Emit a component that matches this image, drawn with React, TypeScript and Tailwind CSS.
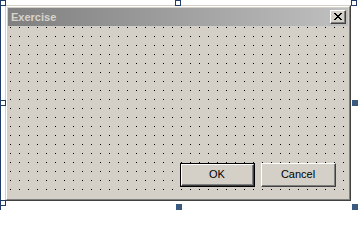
import React from 'react';

function Handle({ filled, className }: { filled?: boolean; className: string }) {
    return (
        <div
            className={`absolute w-[6px] h-[6px] ${filled ? 'bg-[#3a5a80]' : 'bg-white border border-[#1f3b66]'} ${className}`}
        />
    );
}

function CloseGlyph() {
    // classic 8x7 caption "X"
    const rows = ['11000011', '01100110', '00111100', '00011000', '00111100', '01100110', '11000011'];
    return (
        <svg width="8" height="7" viewBox="0 0 8 7" shapeRendering="crispEdges">
            {rows.map((row, y) =>
                row.split('').map((c, x) => (c === '1' ? <rect key={`${x}-${y}`} x={x} y={y} width="1" height="1" fill="#000" /> : null))
            )}
        </svg>
    );
}

function Button({ label, isDefault }: { label: string; isDefault?: boolean }) {
    const face = (
        <div className="flex-1 flex border-t border-l border-t-white border-l-white border-b border-r border-b-[#404040] border-r-[#404040]">
            <div className="flex-1 flex items-center justify-center border-b border-r border-b-[#808080] border-r-[#808080] text-[11px] text-black">
                {label}
            </div>
        </div>
    );
    return (
        <div className={`w-[75px] h-[24px] flex bg-[#d4d0c8] ${isDefault ? 'border border-black' : ''}`}>
            {face}
        </div>
    );
}

export default function App() {
    return (
        <div className="relative w-[358px] h-[210px] bg-white border-l border-[#1f3b66] overflow-hidden font-['Liberation_Sans',Arial,sans-serif]">
            {/* the form */}
            <div className="ml-[4px] mt-[5px] w-[346px] h-[196px] flex border-t border-l border-t-[#d4d0c8] border-l-[#d4d0c8] border-b border-r border-b-[#404040] border-r-[#404040]">
                <div className="flex-1 flex border-t border-l border-t-white border-l-white border-b border-r border-b-[#808080] border-r-[#808080]">
                    <div className="flex-1 flex flex-col bg-[#d4d0c8] p-px">
                        <div className="h-[18px] flex items-center justify-between pl-[3px] pr-[2px] bg-gradient-to-r from-[#808080] to-[#c0c0c0]">
                            <span className="text-[11px] font-bold text-[#d8d4cc] leading-none">Exercise</span>
                            <div className="w-[16px] h-[14px] flex bg-[#d4d0c8] border-t border-l border-t-white border-l-white border-b border-r border-b-[#404040] border-r-[#404040]">
                                <div className="flex-1 flex items-center justify-center border-b border-r border-b-[#808080] border-r-[#808080]">
                                    <CloseGlyph />
                                </div>
                            </div>
                        </div>
                        <div className="flex-1 flex items-end justify-end gap-[6px] pr-[12px] pb-[11px] bg-[#d4d0c8] bg-[conic-gradient(from_270deg_at_1px_1px,#000_90deg,transparent_0)] bg-[length:9px_9px] bg-[position:2px_1px]">
                            <Button label="OK" isDefault />
                            <Button label="Cancel" />
                        </div>
                    </div>
                </div>
            </div>

            {/* selection handles */}
            <Handle className="left-[-1px] top-0" />
            <Handle className="left-[174px] top-0" />
            <Handle className="left-[350px] top-0" />
            <Handle className="left-[-1px] top-[100px]" />
            <Handle filled className="left-[351px] top-[100px]" />
            <Handle className="left-[-1px] top-[200px]" />
            <Handle filled className="left-[175px] top-[204px]" />
            <Handle filled className="left-[351px] top-[204px]" />
        </div>
    );
}
